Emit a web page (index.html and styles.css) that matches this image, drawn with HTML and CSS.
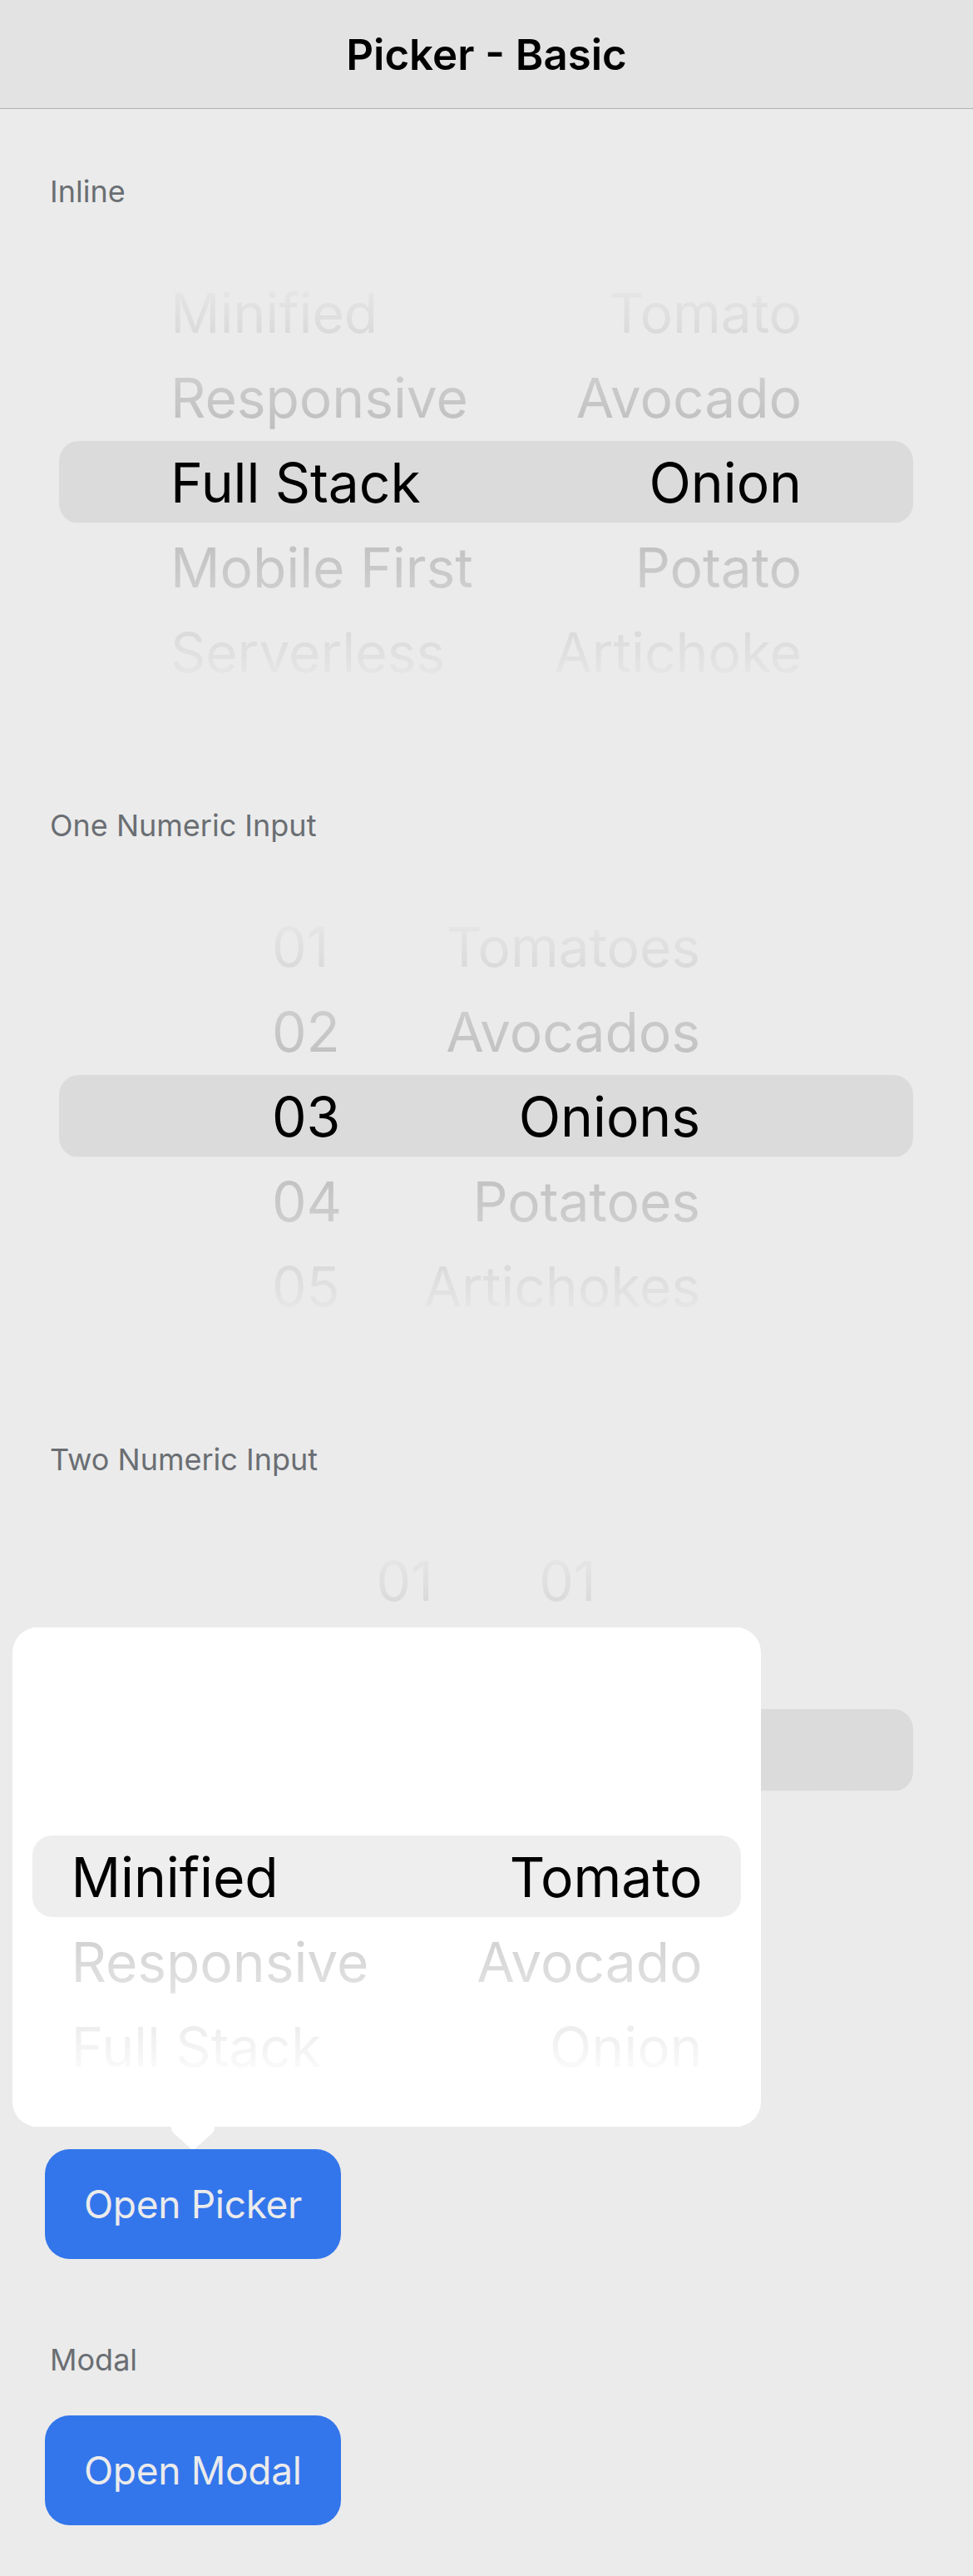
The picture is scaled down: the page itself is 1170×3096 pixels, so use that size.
FILE: index.html
```html
<!DOCTYPE html>
<html lang="en">
<head>
<meta charset="utf-8">
<title>Picker - Basic</title>
<link rel="stylesheet" href="styles.css">
</head>
<body>
<div class="page">
  <header class="toolbar">
    <h1 class="title">Picker - Basic</h1>
  </header>
  <main class="content">
    <section class="section">
      <div class="label">Inline</div>
      <div class="picker">
        <div class="highlight"></div>
        <div class="cols cols-wide">
          <div class="col">
            <div class="opt">Minified</div>
            <div class="opt">Responsive</div>
            <div class="opt">Full Stack</div>
            <div class="opt">Mobile First</div>
            <div class="opt">Serverless</div>
          </div>
          <div class="col col-end">
            <div class="opt">Tomato</div>
            <div class="opt">Avocado</div>
            <div class="opt">Onion</div>
            <div class="opt">Potato</div>
            <div class="opt">Artichoke</div>
          </div>
        </div>
        <div class="fade fade-top"></div>
        <div class="fade fade-bottom"></div>
      </div>
    </section>

    <section class="section">
      <div class="label">One Numeric Input</div>
      <div class="picker">
        <div class="highlight"></div>
        <div class="cols cols-num">
          <div class="col">
            <div class="opt">01</div>
            <div class="opt">02</div>
            <div class="opt">03</div>
            <div class="opt">04</div>
            <div class="opt">05</div>
          </div>
          <div class="col col-end">
            <div class="opt">Tomatoes</div>
            <div class="opt">Avocados</div>
            <div class="opt">Onions</div>
            <div class="opt">Potatoes</div>
            <div class="opt">Artichokes</div>
          </div>
        </div>
        <div class="fade fade-top"></div>
        <div class="fade fade-bottom"></div>
      </div>
    </section>

    <section class="section">
      <div class="label">Two Numeric Input</div>
      <div class="picker">
        <div class="highlight"></div>
        <div class="cols cols-two">
          <div class="col">
            <div class="opt">01</div>
            <div class="opt">02</div>
            <div class="opt">03</div>
            <div class="opt">04</div>
            <div class="opt">05</div>
          </div>
          <div class="col col-end">
            <div class="opt">01</div>
            <div class="opt">02</div>
            <div class="opt">03</div>
            <div class="opt">04</div>
            <div class="opt">05</div>
          </div>
        </div>
        <div class="fade fade-top"></div>
        <div class="fade fade-bottom"></div>
      </div>
    </section>

    <section class="section section-popover">
      <div class="label">Popover</div>
      <div class="btn-row">
        <button class="btn" type="button">Open Picker</button>
      </div>
    </section>

    <section class="section section-modal">
      <div class="label">Modal</div>
      <div class="btn-row">
        <button class="btn" type="button">Open Modal</button>
      </div>
    </section>
  </main>

  <div class="backdrop"></div>

  <div class="popover">
    <div class="picker picker-popover">
      <div class="highlight"></div>
      <div class="cols cols-wide">
        <div class="col col-first">
          <div class="opt">Minified</div>
          <div class="opt">Responsive</div>
          <div class="opt">Full Stack</div>
          <div class="opt">Mobile First</div>
          <div class="opt">Serverless</div>
        </div>
        <div class="col col-end col-first">
          <div class="opt">Tomato</div>
          <div class="opt">Avocado</div>
          <div class="opt">Onion</div>
          <div class="opt">Potato</div>
          <div class="opt">Artichoke</div>
        </div>
      </div>
      <div class="fade fade-top"></div>
      <div class="fade fade-bottom"></div>
    </div>
    <svg class="popover-arrow" width="52" height="30" viewBox="0 0 52 30" aria-hidden="true">
      <path d="M0 0 H52 V4 Q52 7 49.5 9.5 L29.5 27.5 Q26 30.5 22.5 27.5 L2.5 9.5 Q0 7 0 4 Z" fill="#ffffff"/>
    </svg>
  </div>
</div>
</body>
</html>
```

FILE: styles.css
```css
html, body {
  margin: 0;
  padding: 0;
}

body {
  background: #ffffff;
  font-family: Inter, "Liberation Sans", Arial, sans-serif;
  color: #000000;
}

.page {
  position: relative;
  min-height: 3096px;
  background: #ffffff;
  overflow: hidden;
}

/* Toolbar */
.toolbar {
  height: 130px;
  background: #f7f7f7;
  border-bottom: 1px solid #bfbfbf;
}

.title {
  margin: 0;
  padding-top: 36px;
  font-size: 51px;
  font-weight: 600;
  line-height: 60px;
  text-align: center;
  color: #000000;
}

/* Content */
.content {
  padding: 78px 0 60px;
}

.section + .section {
  margin-top: 91px;
}

.section-popover {
  margin-top: 92px;
}

.section + .section-modal {
  margin-top: 100px;
}

.label {
  padding-left: 60px;
  font-size: 36px;
  line-height: 42px;
  color: #74787d;
}

/* Picker */
.picker {
  position: relative;
  height: 600px;
  margin: 29px 72px 0 71px;
  overflow: hidden;
}

.highlight {
  position: absolute;
  left: 0;
  right: 0;
  top: 250px;
  height: 99px;
  border-radius: 24px;
  background: #eeeeef;
}

.cols {
  position: relative;
  height: 100%;
  margin: 0 auto;
  display: flex;
  justify-content: space-between;
}

.cols-wide {
  width: 759px;
}

.cols-num {
  width: 515px;
}

.cols-two {
  width: 264px;
}

.col {
  display: flex;
  flex-direction: column;
  justify-content: center;
  align-items: flex-start;
}

.col-end {
  align-items: flex-end;
}

.col-first {
  justify-content: flex-start;
  padding-top: 249px;
}

.opt {
  height: 102px;
  line-height: 102px;
  font-size: 66px;
  letter-spacing: -0.1px;
  white-space: nowrap;
  color: #000000;
}

.fade {
  position: absolute;
  left: 0;
  right: 0;
  pointer-events: none;
}

.fade-top {
  top: 0;
  height: 249px;
  background: linear-gradient(to bottom, rgba(255, 255, 255, 1) 20%, rgba(255, 255, 255, 0.8) 100%);
}

.fade-bottom {
  top: 348px;
  bottom: 0;
  background: linear-gradient(to top, rgba(255, 255, 255, 1) 20%, rgba(255, 255, 255, 0.8) 100%);
}

/* Buttons */
.btn-row {
  margin-top: 46px;
  padding-left: 54px;
}

.btn {
  display: block;
  height: 132px;
  padding: 0 47px;
  border: 0;
  border-radius: 30px;
  background: #3880ff;
  color: #ffffff;
  font-family: inherit;
  font-size: 46px;
  letter-spacing: -0.3px;
  line-height: 132px;
  cursor: pointer;
}

/* Backdrop + popover */
.backdrop {
  position: absolute;
  inset: 0;
  background: rgba(0, 0, 0, 0.08);
  z-index: 10;
}

.popover {
  position: absolute;
  left: 15px;
  top: 1956px;
  width: 900px;
  height: 600px;
  background: #ffffff;
  border-radius: 30px;
  z-index: 11;
}

.picker-popover {
  margin: 0 24px;
}

.picker-popover .highlight {
  top: 250px;
  height: 98px;
  background: #eeeeee;
}

.popover-arrow {
  position: absolute;
  left: 191px;
  top: 598px;
  display: block;
}
```
